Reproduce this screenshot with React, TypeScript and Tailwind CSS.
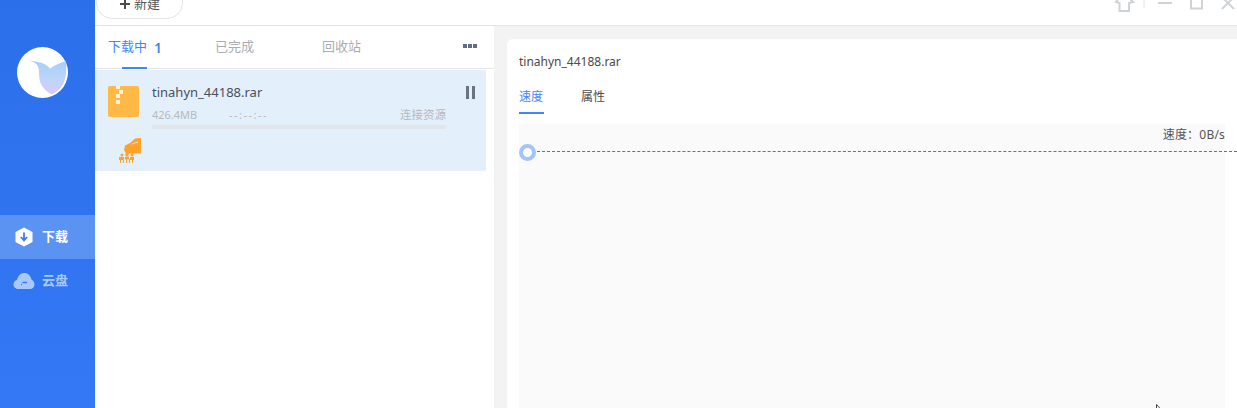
const font = { fontFamily: '"Noto Sans", "Noto Sans CJK SC", sans-serif' };

function Logo() {
  return (
    <svg width="51" height="51" viewBox="0 0 51 51" className="block">
      <defs>
        <linearGradient id="bird" x1="0" y1="0" x2="0" y2="1">
          <stop offset="0" stopColor="#a6cdf8" />
          <stop offset="0.55" stopColor="#bcd6f9" />
          <stop offset="1" stopColor="#dcc9f6" />
        </linearGradient>
      </defs>
      <circle cx="25.5" cy="25.5" r="25.5" fill="#fff" />
      <path
        d="M10 13 C14 13.500 16 14.500 18 16 C21 18 22 21 22 25 C22 30 22.500 35 25 39 C28 43 31 46 35 47.500 C42 44 47 38 48.500 30 C49.500 24 49.500 19 49 14 C44 15.500 38 18 33 21.500 C31 19 28 17 25 16 C20 14.500 15 13.500 10 13 Z"
        fill="url(#bird)"
      />
    </svg>
  );
}

function RarIcon() {
  return (
    <div className="relative w-[31px] h-[31px] rounded-[2px] bg-[#ffb944]">
      <div className="absolute left-[8px] top-0 w-[4px] h-[3px] bg-[#fff3dc]" />
      <div className="absolute left-[11px] top-[4px] w-[4px] h-[4px] bg-[#fff3dc]" />
      <div className="absolute left-[8px] top-[8px] w-[4px] h-[4px] bg-[#fff3dc]" />
      <div className="absolute left-[8px] top-[14px] w-[4px] h-[4px] bg-[#fff3dc]" />
    </div>
  );
}

function PeopleBadge() {
  return (
    <svg width="24" height="25" viewBox="0 0 24 25" className="block">
      <path d="M6 12 L7 7.500 L12 5 L17 0.500 L23 0 L23 15.500 L8 15.500 Z" fill="#fda32c" />
      <path d="M14 6 L20 4" stroke="#ffe3b5" strokeWidth="1" />
      <g fill="#f7a533">
        <circle cx="4" cy="17" r="1.500" />
        <circle cx="9" cy="16.500" r="1.700" />
        <circle cx="14" cy="17" r="1.500" />
        <rect x="1" y="19" width="5" height="3" />
        <rect x="7" y="18.500" width="4" height="3" />
        <rect x="12" y="19" width="4" height="3" />
        <rect x="2" y="22" width="1" height="3.500" />
        <rect x="5" y="21" width="1" height="4.500" />
        <rect x="8" y="21" width="1" height="4.500" />
        <rect x="11" y="21" width="1" height="4.500" />
        <rect x="14" y="22" width="1" height="3.500" />
      </g>
    </svg>
  );
}

function Sidebar() {
  return (
    <div className="w-[95px] shrink-0 bg-gradient-to-b from-[#2b6fea] to-[#3478f5] flex flex-col">
      <div className="mt-[47px] ml-[17px]">
        <Logo />
      </div>
      <div className="mt-[117px] h-[44px] bg-[#5b93f3] flex items-center pl-[15px] gap-[9px]">
        <svg width="18" height="20" viewBox="0 0 18 20">
          <path d="M9 0.500 L17.500 5 L17.500 15 L9 19.500 L0.500 15 L0.500 5 Z" fill="#fff" strokeLinejoin="round" />
          <path d="M9 5.500 V13 M5.800 10 L9 13.500 L12.200 10" stroke="#3a7cf0" strokeWidth="1.800" fill="none" />
        </svg>
        <span className="text-[13px] font-bold text-white">下载</span>
      </div>
      <div className="h-[44px] flex items-center pl-[13px] gap-[7px]">
        <svg width="22" height="18" viewBox="0 0 22 18">
          <path d="M5.500 17 C2 17 0.500 14.500 0.500 12.500 C0.500 10 2 8.500 4 8 C5 3.500 8 1 11.500 1 C15 1 17.500 3.500 18.500 7.500 C20.500 8.500 21.500 10.500 21.500 12.500 C21.500 15 19.500 17 17 17 Z" fill="#a9c9fb" />
          <path d="M9.500 10.500 H14 M8 12.500 H9" stroke="#3a7cf0" strokeWidth="1.300" />
        </svg>
        <span className="text-[13px] font-bold text-[#a9c9fb]">云盘</span>
      </div>
    </div>
  );
}

function TopBar() {
  return (
    <div className="h-[26px] shrink-0 bg-white border-b border-[#e4e4e4] flex items-end overflow-hidden relative">
      <div className="absolute left-[1px] -top-[14px] w-[87px] h-[33px] rounded-[16px] border border-[#e4e4e4] bg-white flex items-end justify-center pb-[6px] gap-[3px]">
        <svg width="12" height="12" viewBox="0 0 12 12" className="mb-[2px]">
          <path d="M6 1 V11 M1 6 H11" stroke="#4a4a4a" strokeWidth="2" />
        </svg>
        <span className="text-[13px] leading-[18px] text-[#555]">新建</span>
      </div>
      <div className="absolute right-0 -top-[6px] w-[130px] h-[20px]">
        <svg width="130" height="20" viewBox="0 0 130 20" fill="none" stroke="#cfd2d6" strokeWidth="2">
          <path d="M12 4 L9 8 L12.500 9 V17 H22 V9 L26 8 L22 4" />
          <path d="M37 6 V14" stroke="#e4e4e4" strokeWidth="1" />
          <path d="M51 9 H65" />
          <path d="M84 5 V14.500 H95 V5" />
          <path d="M115 3 L127 15 M127 3 L115 15" />
        </svg>
      </div>
    </div>
  );
}

function DownloadList() {
  return (
    <div className="w-[399px] shrink-0 bg-white flex flex-col">
      <div className="h-[43px] border-b border-[#e6e6e6] relative flex items-center text-[13px]">
        <span className="ml-[13px] text-[#3f86f7]">下载中</span>
        <span className="ml-[7px] text-[14px] font-semibold text-[#3f86f7]">1</span>
        <span className="ml-[53px] text-[#a9adb3]">已完成</span>
        <span className="ml-[68px] text-[#a9adb3]">回收站</span>
        <div className="ml-auto mr-[17px] flex gap-[1px] mb-[3px]">
          <div className="w-[4px] h-[4px] bg-[#5f6d8a]" />
          <div className="w-[4px] h-[4px] bg-[#5f6d8a]" />
          <div className="w-[4px] h-[4px] bg-[#5f6d8a]" />
        </div>
        <div className="absolute left-[27px] -bottom-[1px] w-[25px] h-[2px] bg-[#3f86f7]" />
      </div>
      <div className="mt-[1px] w-[391px] h-[101px] bg-[#e3effb] flex pl-[13px] pt-[16px]">
        <div className="w-[31px] shrink-0">
          <RarIcon />
          <div className="mt-[21px] ml-[10px]">
            <PeopleBadge />
          </div>
        </div>
        <div className="ml-[13px] w-[294px]">
          <div className="text-[13px] leading-[14px] text-[#4a4f5c] mt-[-1px]">tinahyn_44188.rar</div>
          <div className="mt-[9px] flex text-[11px] leading-[14px] text-[#b7b9bd]">
            <span className="w-[77px]">426.4MB</span>
            <span className="tracking-[1.500px]">--:--:--</span>
            <span className="ml-auto text-[11.500px]">连接资源</span>
          </div>
          <div className="mt-[3px] h-[4px] bg-[#e2e5e9]" />
        </div>
        <div className="ml-[20px] flex gap-[3px] h-[13px]">
          <div className="w-[3px] bg-[#6b7280]" />
          <div className="w-[3px] bg-[#6b7280]" />
        </div>
      </div>
    </div>
  );
}

function Detail() {
  return (
    <div className="flex-1 min-w-0 bg-[#f3f3f3] pl-[13px] pt-[13px] overflow-hidden">
      <div className="w-[740px] h-[400px] bg-white rounded-tl-[6px] pl-[12px] pt-[15px]">
        <div className="text-[12px] leading-[16px] text-[#4a4a4a]">tinahyn_44188.rar</div>
        <div className="mt-[19px] flex text-[12px] leading-[16px]">
          <div className="w-[25px] h-[25px] border-b-2 border-[#3f86f7] text-[#3f86f7]">速度</div>
          <div className="ml-[37px] text-[#4a4a4a]">属性</div>
        </div>
        <div className="relative mt-[10px] w-[706px] h-[290px] bg-[#fafafa]">
          <div className="text-right text-[12px] leading-[16px] pt-[3px] tracking-[0.200px] text-[#555]">速度：0B/s</div>
          <div className="absolute left-[18px] top-[27px] w-[700px] border-t border-dashed border-[#3a78e0]" />
          <div className="absolute left-0 top-[20px] w-[17px] h-[17px] rounded-full border-[4px] border-[#a3c3fb] bg-white" />
          <svg width="7" height="10" viewBox="0 0 7 10" className="absolute left-[637px] top-[280px]">
            <path d="M0.500 0.500 V8 L2.500 6.500 L5.500 6 Z" fill="#fff" stroke="#444" strokeWidth="1" />
          </svg>
        </div>
      </div>
    </div>
  );
}

export default function App() {
  return (
    <div className="w-[1237px] h-[408px] overflow-hidden flex bg-white" style={font}>
      <Sidebar />
      <div className="flex-1 min-w-0 flex flex-col">
        <TopBar />
        <div className="flex-1 min-h-0 flex">
          <DownloadList />
          <Detail />
        </div>
      </div>
    </div>
  );
}
